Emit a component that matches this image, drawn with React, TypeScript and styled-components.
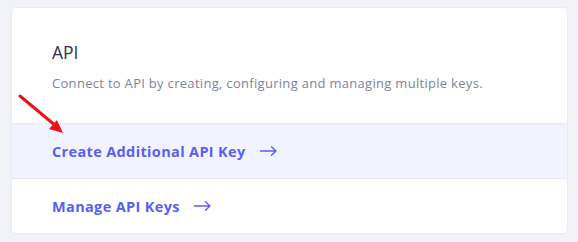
import React from "react";
import styled, { createGlobalStyle } from "styled-components";

const Global = createGlobalStyle`
  html, body { margin: 0; padding: 0; background: #f2f3f8; }
  body { font-family: "Open Sans", "Lato", sans-serif; }
`;

const Page = styled.div`
  width: 578px;
  height: 242px;
  box-sizing: border-box;
  padding: 8px 11px 8px 12px;
  position: relative;
`;

const Card = styled.div`
  background: #ffffff;
  border-radius: 4px;
  box-shadow: 0 0 0 1px #e9ebf2, 0 1px 2px rgba(40, 50, 90, 0.06);
  display: flex;
  flex-direction: column;
  overflow: hidden;
  height: 225px;
`;

const Header = styled.div`
  padding: 33px 40px 0 40px;
  height: 115px;
  box-sizing: border-box;
`;

const Title = styled.h2`
  margin: 0;
  font-size: 17.5px;
  font-weight: 400;
  color: #2e3050;
  line-height: 22px;
`;

const Desc = styled.p`
  margin: 11px 0 0;
  font-size: 13px;
  letter-spacing: 0.3px;
  color: #7d8499;
  line-height: 18px;
`;

const Row = styled.a<{ $active?: boolean }>`
  display: flex;
  align-items: center;
  gap: 14px;
  height: 55px;
  box-sizing: border-box;
  padding: 0 40px;
  border-top: 1px solid #e6e9f3;
  background: ${(p) => (p.$active ? "#f1f4fe" : "#ffffff")};
  color: #5b5ef2;
  font-size: 14.5px;
  letter-spacing: 0.35px;
  font-weight: 700;
  text-decoration: none;
  flex: 1;
`;

const Arrow = () => (
  <svg width="17" height="10" viewBox="0 0 17 10" fill="none">
    <path d="M0.5 5H16M11.5 0.8L16 5L11.5 9.2" stroke="#5b5ef2" strokeWidth="1.4" strokeLinecap="round" strokeLinejoin="round" />
  </svg>
);

const Pointer = styled.svg`
  position: absolute;
  left: 16px;
  top: 92px;
`;

export default function App() {
  return (
    <>
      <Global />
      <Page>
        <Card>
          <Header>
            <Title>API</Title>
            <Desc>Connect to API by creating, configuring and managing multiple keys.</Desc>
          </Header>
          <Row $active href="#">
            Create Additional API Key <Arrow />
          </Row>
          <Row href="#">
            Manage API Keys <Arrow />
          </Row>
        </Card>
        <Pointer width="52" height="46" viewBox="0 0 52 46">
          <line x1="4" y1="4" x2="40" y2="34" stroke="#e8141b" strokeWidth="3" strokeLinecap="round" />
          <polygon points="47,41 33,37 41,28" fill="#e8141b" />
        </Pointer>
      </Page>
    </>
  );
}
